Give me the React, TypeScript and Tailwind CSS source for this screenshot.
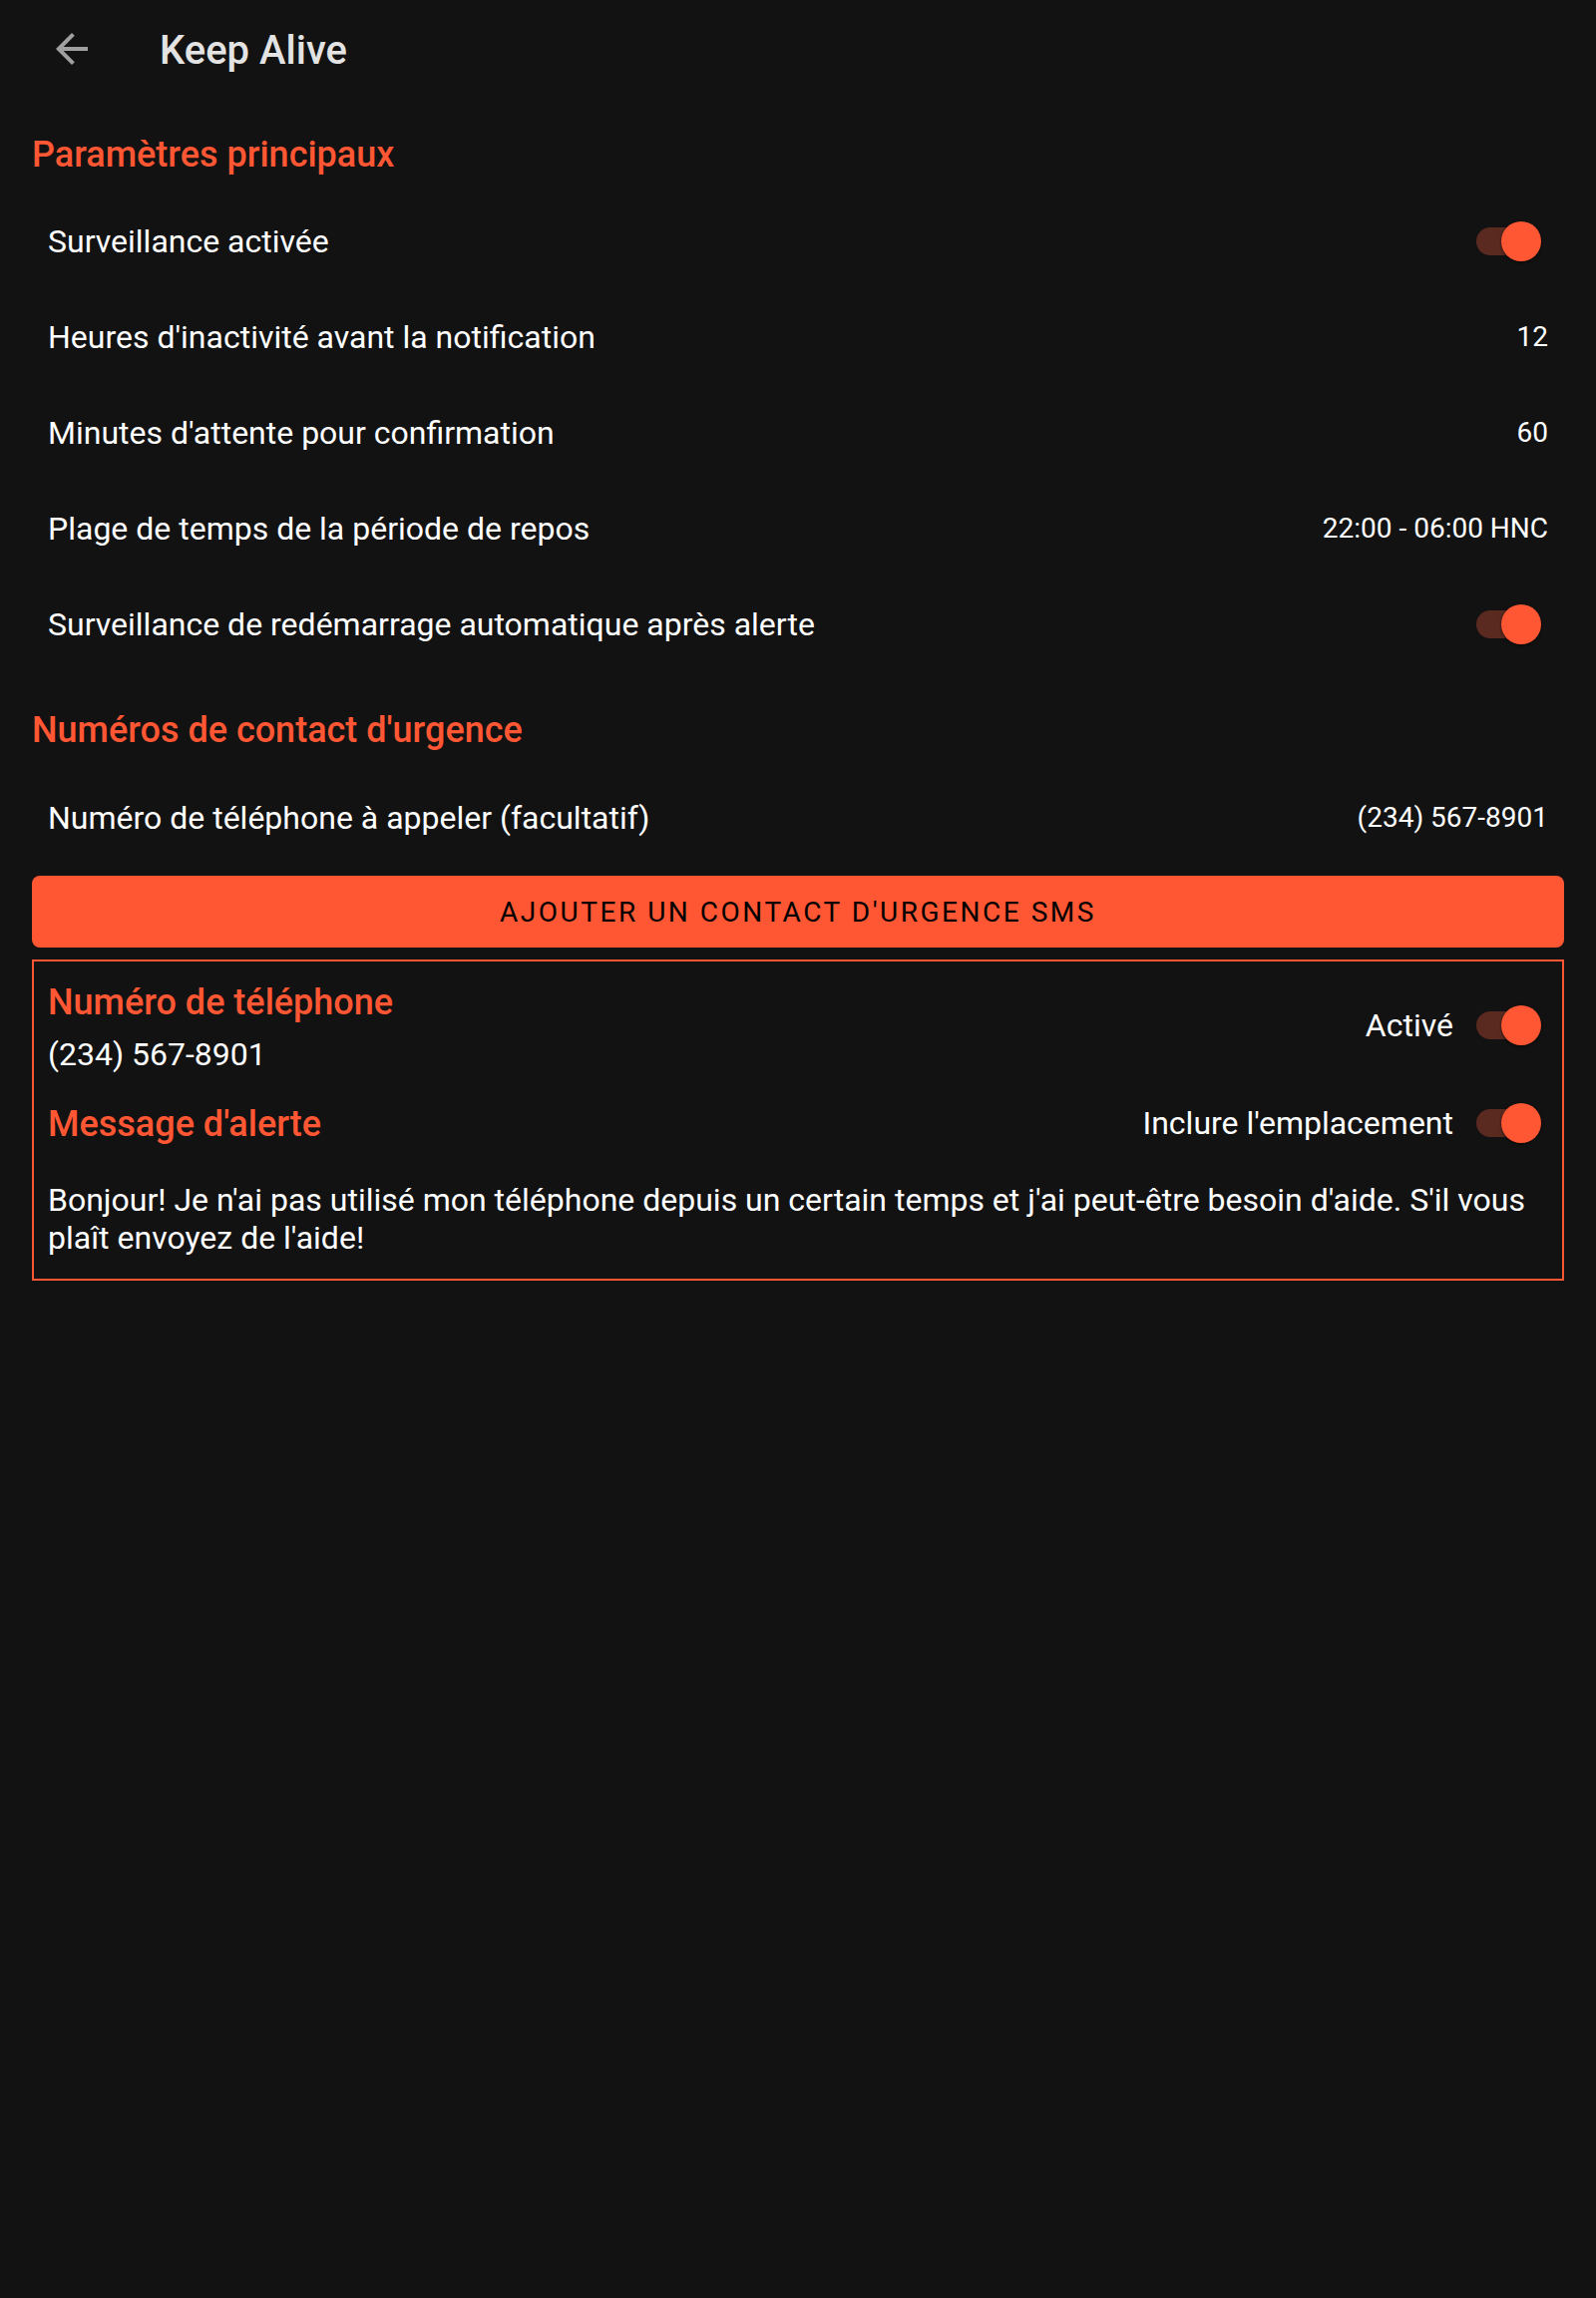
import React from "react";

function Toggle() {
  return (
    <div className="relative w-[65px] h-[40px] mr-[7px] shrink-0">
      <div className="absolute left-0 top-[6px] w-[60px] h-[28px] rounded-full bg-[#5a2a20]" />
      <div className="absolute right-0 top-0 w-[40px] h-[40px] rounded-full bg-[#ff5733] shadow-[0_1px_3px_rgba(0,0,0,0.6)]" />
    </div>
  );
}

function Row({ label, value, toggle }: { label: string; value?: string; toggle?: boolean }) {
  return (
    <div className="h-[96px] px-[48px] flex items-center justify-between">
      <span className="text-[32px] leading-[38px] text-white">{label}</span>
      {toggle ? (
        <Toggle />
      ) : (
        <span className="text-[28px] leading-[34px] text-white">{value}</span>
      )}
    </div>
  );
}

export default function App() {
  return (
    <div className="min-h-screen w-full bg-[#121212] font-['Roboto',sans-serif]">
      {/* Toolbar */}
      <div className="h-[98px] flex items-center">
        <div className="ml-[48px] w-[48px] h-[48px] flex items-center justify-center">
          <svg width="48" height="48" viewBox="0 0 24 24" fill="#a0a0a0">
            <path d="M20 11H7.83l5.59-5.59L12 4l-8 8 8 8 1.41-1.41L7.83 13H20v-2z" />
          </svg>
        </div>
        <span className="ml-[64px] mt-[3px] text-[40px] leading-[48px] font-medium text-[#e3e3e3]">Keep Alive</span>
      </div>

      {/* Section 1 */}
      <div className="h-[96px] pt-[37px] px-[32px]">
        <div className="text-[36px] leading-[40px] font-medium text-[#ff5733]">Paramètres principaux</div>
      </div>
      <Row label="Surveillance activée" toggle />
      <Row label="Heures d'inactivité avant la notification" value="12" />
      <Row label="Minutes d'attente pour confirmation" value="60" />
      <Row label="Plage de temps de la période de repos" value="22:00 - 06:00 HNC" />
      <Row label="Surveillance de redémarrage automatique après alerte" toggle />

      {/* Section 2 */}
      <div className="h-[98px] pt-[38px] px-[32px]">
        <div className="text-[36px] leading-[40px] font-medium text-[#ff5733]">Numéros de contact d'urgence</div>
      </div>
      <Row label="Numéro de téléphone à appeler (facultatif)" value="(234) 567-8901" />

      <div className="px-[32px]">
        <div className="mt-[10px] h-[72px] rounded-[8px] bg-[#ff5733] flex items-center justify-center">
          <span className="mt-[2px] text-[28px] leading-[32px] font-normal tracking-[0.09em] text-black">
            AJOUTER UN CONTACT D'URGENCE SMS
          </span>
        </div>

        <div className="mt-[12px] border-2 border-[#ff5733] px-[14px] pt-[20px] pb-[22px]">
          <div className="flex items-center justify-between">
            <div className="flex flex-col">
              <span className="text-[36px] leading-[42px] font-medium text-[#ff5733]">Numéro de téléphone</span>
              <span className="mt-[12px] text-[32px] leading-[38px] text-white">(234) 567-8901</span>
            </div>
            <div className="flex items-center gap-[23px] mb-[4px]">
              <span className="text-[32px] leading-[38px] text-white">Activé</span>
              <Toggle />
            </div>
          </div>

          <div className="mt-[30px] h-[42px] flex items-center justify-between">
            <span className="text-[36px] leading-[42px] font-medium text-[#ff5733]">Message d'alerte</span>
            <div className="flex items-center gap-[23px] mb-[2px]">
              <span className="text-[32px] leading-[38px] text-white">Inclure l'emplacement</span>
              <Toggle />
            </div>
          </div>

          <p className="mt-[37px] text-[32px] leading-[37.5px] text-white">
            Bonjour! Je n'ai pas utilisé mon téléphone depuis un certain temps et j'ai peut-être besoin d'aide. S'il vous plaît envoyez de l'aide!
          </p>
        </div>
      </div>
    </div>
  );
}
